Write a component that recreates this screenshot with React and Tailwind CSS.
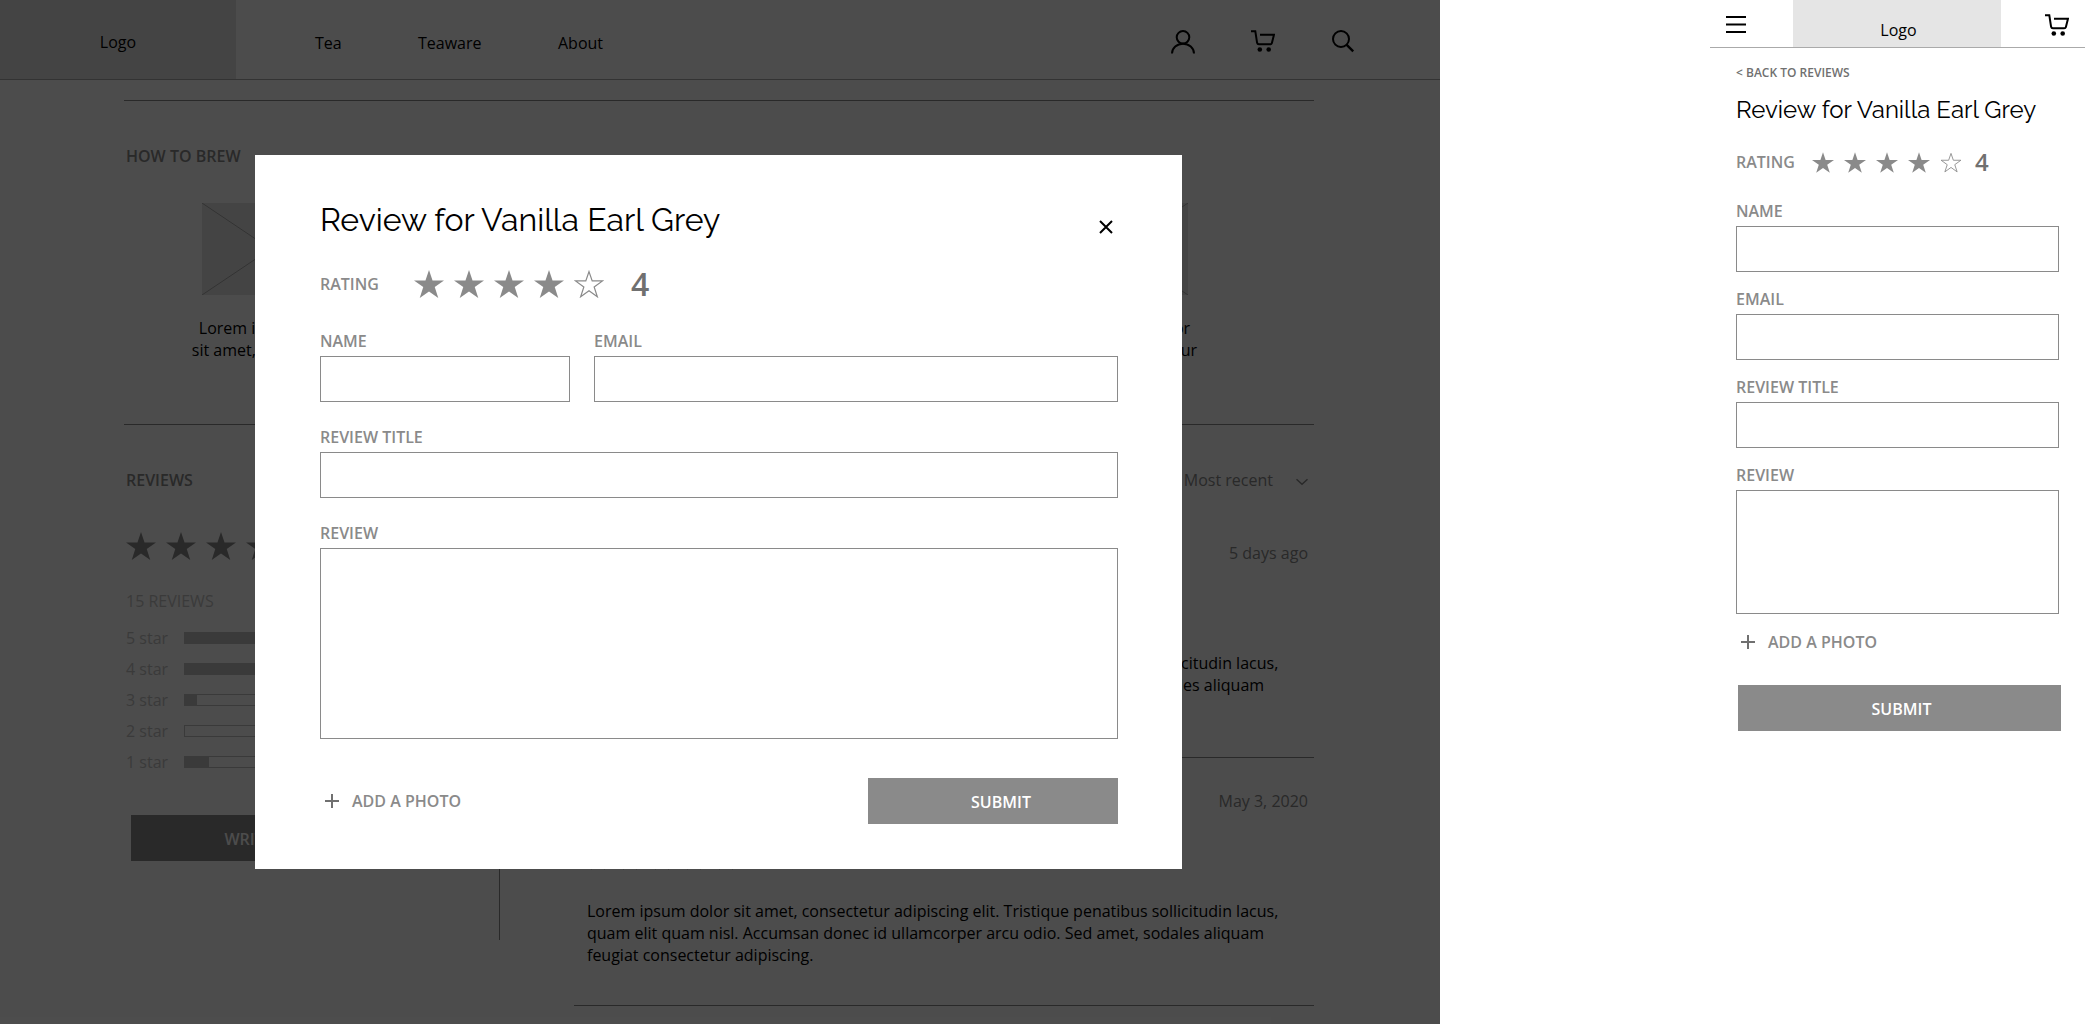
import React from "react";

function PersonIcon() {
  return (
    <svg width="24" height="24" viewBox="0 0 24 24" fill="none" stroke="currentColor" strokeWidth="2" aria-hidden="true">
      <circle cx="12" cy="7.3" r="6.3" />
      <path d="M1 23.500c0-5.500 5-9.800 11-9.800s11 4.300 11 9.800" />
    </svg>
  );
}

function CartIcon() {
  return (
    <svg width="24" height="24" viewBox="0 0 24 24" fill="none" stroke="currentColor" strokeWidth="2" aria-hidden="true">
      <path d="M0 1.200h4.300l1.800 11.600c.2 1 .9 1.500 1.800 1.500h11.300c.9 0 1.500-.5 1.700-1.300L23 4.700H9" />
      <circle cx="8.800" cy="19.500" r="2.300" fill="currentColor" stroke="none" />
      <circle cx="17.700" cy="19.500" r="2.300" fill="currentColor" stroke="none" />
    </svg>
  );
}

function SearchIcon() {
  return (
    <svg width="24" height="24" viewBox="0 0 24 24" fill="none" stroke="currentColor" strokeWidth="2" aria-hidden="true">
      <circle cx="10" cy="9" r="8" />
      <path d="M15.500 14.700l6.700 6.700" strokeWidth="2.400" />
    </svg>
  );
}

function Star({ filled, className }) {
  return (
    <svg className={className} viewBox="0 0 30 28" aria-hidden="true">
      {filled ? (
        <path d="M15 0l3.540 10.450H30l-9.260 6.600L24.270 28 15 21.400 5.730 28l3.530-10.950L0 10.450h11.460z" fill="#8a8a8a" />
      ) : (
        <path d="M15 1.600l3.200 9.350h10.300l-8.350 6 3.200 9.800-8.350-6-8.350 6 3.200-9.800-8.350-6h10.300z" fill="none" stroke="#8a8a8a" strokeWidth="1.200" />
      )}
    </svg>
  );
}

function Stars({ value, className, starClass }) {
  return (
    <span role="img" aria-label={`${value} out of 5 stars`} className={`flex ${className}`}>
      {[1, 2, 3, 4, 5].map((n) => (
        <Star key={n} filled={n <= value} className={starClass} />
      ))}
    </span>
  );
}

function Field({ id, label, multiline, boxClass = "h-[46px]", className = "" }) {
  const box = `block w-full resize-none rounded-none border border-[#8a8a8a] bg-white px-3 text-black outline-none ${boxClass}`;
  return (
    <div className={className}>
      <label htmlFor={id} className="mb-1 block font-semibold text-[#8a8a8a]">
        {label}
      </label>
      {multiline ? <textarea id={id} className={box} /> : <input id={id} type="text" className={box} />}
    </div>
  );
}

function AddPhoto() {
  return (
    <button type="button" className="flex items-center gap-[13px] pl-[5px] font-semibold text-[#8a8a8a]">
      <svg width="14" height="14" viewBox="0 0 14 14" stroke="#707070" strokeWidth="2" aria-hidden="true">
        <path d="M7 0v14M0 7h14" />
      </svg>
      ADD A PHOTO
    </button>
  );
}

const LOREM =
  "Lorem ipsum dolor sit amet, consectetur adipiscing elit. Tristique penatibus sollicitudin lacus, quam elit quam nisl. Accumsan donec id ullamcorper arcu odio. Sed amet, sodales aliquam feugiat consectetur adipiscing.";

function BrewStep() {
  return (
    <li className="flex w-[160px] flex-col items-center text-center">
      <svg width="137" height="92" viewBox="0 0 137 92" aria-hidden="true">
        <rect width="137" height="92" fill="#e5e5e5" />
        <path d="M0 0l137 92M137 0L0 92" stroke="#aaaaaa" />
      </svg>
      <p className="mt-[22px]">
        Lorem ipsum dolor
        <br />
        sit amet, consectetur
      </p>
    </li>
  );
}

function Review({ date, value }) {
  return (
    <article className="border-b border-[#8a8a8a] pt-8 pr-1.5 pb-[39px] pl-[13px]">
      <time className="block text-right text-[#8a8a8a]">{date}</time>
      <Stars value={value} className="mt-[37px] mb-[30px] gap-2.5" starClass="h-[21px] w-[22px]" />
      <p className="pr-[18px]">{LOREM}</p>
    </article>
  );
}

const BREAKDOWN = [
  { stars: 5, fill: 200 },
  { stars: 4, fill: 120 },
  { stars: 3, fill: 12 },
  { stars: 2, fill: 0 },
  { stars: 1, fill: 24 },
];

function ProductPage() {
  return (
    <div>
      <header className="flex h-20 items-start border-b border-[#aaaaaa]">
        <a href="#home" className="h-full w-[236px] bg-[#e5e5e5] pt-[31px] text-center">
          Logo
        </a>
        <nav className="flex flex-1 pt-8 pl-[79px]">
          <a href="#tea" className="w-[103px]">Tea</a>
          <a href="#teaware" className="w-[140px]">Teaware</a>
          <a href="#about">About</a>
        </nav>
        <div className="flex gap-14 pt-[30px] pr-[85px]">
          <button type="button" aria-label="Account"><PersonIcon /></button>
          <button type="button" aria-label="Cart"><CartIcon /></button>
          <button type="button" aria-label="Search"><SearchIcon /></button>
        </div>
      </header>

      <main className="mt-5 mr-[126px] ml-[124px]">
        <section className="border-t border-[#8a8a8a] pt-11 pb-[63px]">
          <h2 className="pl-0.5 font-semibold text-[#8a8a8a]">HOW TO BREW</h2>
          <ul className="mt-9 flex justify-between pr-[115px] pl-[66px]">
            <BrewStep />
            <BrewStep />
            <BrewStep />
          </ul>
        </section>

        <section className="border-t border-[#8a8a8a] pt-11">
          <div className="flex justify-between pr-1.5 pl-0.5">
            <h2 className="font-semibold text-[#8a8a8a]">REVIEWS</h2>
            <button type="button" className="flex items-center gap-[23px] text-[#8a8a8a]">
              Most recent
              <svg width="12" height="8" viewBox="0 0 12 8" className="mt-1" fill="none" stroke="currentColor" strokeWidth="1.500" aria-hidden="true">
                <path d="M.5 1.200L6 6.200l5.500-5" />
              </svg>
            </button>
          </div>
          <div className="mt-[19px] flex items-start gap-[74px]">
            <div className="h-[430px] w-[376px] border-r border-[#8a8a8a] pt-[22px] pl-0.5">
              <Stars value={4} className="gap-2.5" starClass="h-7 w-[30px]" />
              <p className="mt-[30px] text-[#c4c4c4]">15 REVIEWS</p>
              <ul className="mt-[15px] flex flex-col gap-[9px]">
                {BREAKDOWN.map((row) => (
                  <li key={row.stars} className="flex items-center text-[#c4c4c4]">
                    <span className="w-[58px]">{row.stars} star</span>
                    <span className="h-3 w-[200px] border border-[#c4c4c4]">
                      <span className="block h-full max-w-full bg-[#c4c4c4]" style={{ width: row.fill }} />
                    </span>
                  </li>
                ))}
              </ul>
              <button type="button" className="mt-[42px] ml-[5px] h-[46px] w-[312px] bg-[#8a8a8a] pt-0.5 font-semibold text-white">
                WRITE A REVIEW
              </button>
            </div>
            <div className="min-w-0 flex-1">
              <Review date="5 days ago" value={5} />
              <Review date="May 3, 2020" value={5} />
            </div>
          </div>
        </section>
      </main>
    </div>
  );
}

function ReviewDialog() {
  return (
    <form role="dialog" aria-label="Review for Vanilla Earl Grey" className="bg-white pt-[43px] pr-16 pb-[45px] pl-[65px]">
      <div className="flex items-start justify-between">
        <h1 className="font-[Raleway,Lato,sans-serif] text-[32px] leading-[44px]">Review for Vanilla Earl Grey</h1>
        <button type="button" aria-label="Close" className="mt-[22px] mr-[5px]">
          <svg width="14" height="14" viewBox="0 0 14 14" stroke="#000" strokeWidth="2" aria-hidden="true">
            <path d="M1 1l12 12M13 1L1 13" />
          </svg>
        </button>
      </div>
      <div className="mt-5 flex h-11 items-center">
        <span className="w-[94px] font-semibold text-[#8a8a8a]">RATING</span>
        <Stars value={4} className="gap-2.5" starClass="h-7 w-[30px]" />
        <span className="ml-[27px] text-[32px] leading-[44px] font-semibold text-[#707070]">4</span>
      </div>
      <div className="mt-6 grid grid-cols-[250fr_524fr] gap-6">
        <Field id="name" label="NAME" />
        <Field id="email" label="EMAIL" />
        <Field id="title" label="REVIEW TITLE" className="col-span-2" />
        <Field id="review" label="REVIEW" multiline boxClass="h-[191px]" className="col-span-2" />
      </div>
      <div className="mt-[39px] flex items-center justify-between">
        <AddPhoto />
        <button type="submit" className="h-[46px] w-[250px] bg-[#8a8a8a] pt-0.5 pl-4 font-semibold text-white">
          SUBMIT
        </button>
      </div>
    </form>
  );
}

function MobilePage() {
  return (
    <div>
      <header className="flex h-12 items-start justify-between border-b border-[#aaaaaa] pr-4 pl-4">
        <button type="button" aria-label="Menu" className="mt-4 w-[22px]">
          <svg width="20" height="17" viewBox="0 0 20 17" stroke="#000" strokeWidth="2" aria-hidden="true">
            <path d="M0 1h20M0 8.500h20M0 16h20" />
          </svg>
        </button>
        <a href="#home" className="h-full w-[208px] bg-[#e5e5e5] pt-[19px] pl-1 text-center">
          Logo
        </a>
        <button type="button" aria-label="Cart" className="mt-3.5">
          <CartIcon />
        </button>
      </header>
      <main className="pt-[17px] pr-[26px] pl-[26px]">
        <a href="#reviews" className="block text-xs leading-4 font-semibold text-[#707070]">
          &lt; BACK TO REVIEWS
        </a>
        <h1 className="mt-3 font-[Raleway,Lato,sans-serif] text-[24px] leading-[34px]">Review for Vanilla Earl Grey</h1>
        <form>
          <div className="mt-[19px] flex h-8 items-center">
            <span className="w-[76px] font-semibold text-[#8a8a8a]">RATING</span>
            <Stars value={4} className="gap-2.5" starClass="h-[21px] w-[22px]" />
            <span className="ml-[13px] text-[24px] leading-8 font-semibold text-[#707070]">4</span>
          </div>
          <div className="mt-[22px] flex flex-col gap-4">
            <Field id="m-name" label="NAME" />
            <Field id="m-email" label="EMAIL" />
            <Field id="m-title" label="REVIEW TITLE" />
            <Field id="m-review" label="REVIEW" multiline boxClass="h-[124px]" />
          </div>
          <div className="mt-[17px]">
            <AddPhoto />
          </div>
          <div className="-mr-0.5 pt-8 pl-0.5">
            <button type="submit" className="h-[46px] w-full bg-[#8a8a8a] pt-0.5 pl-1 font-semibold text-white">
              SUBMIT
            </button>
          </div>
        </form>
      </main>
    </div>
  );
}

export default function App() {
  return (
    <div className="grid min-h-screen grid-cols-[minmax(0,1440fr)_minmax(0,375fr)] gap-x-[270px] bg-white font-['Open_Sans',sans-serif] text-base leading-[22px] text-black">
      <div className="relative pb-[18px]">
        <ProductPage />
        <div className="absolute inset-0 bg-black/70 pt-[155px] pr-[258px] pl-[255px]">
          <ReviewDialog />
        </div>
      </div>
      <MobilePage />
    </div>
  );
}
